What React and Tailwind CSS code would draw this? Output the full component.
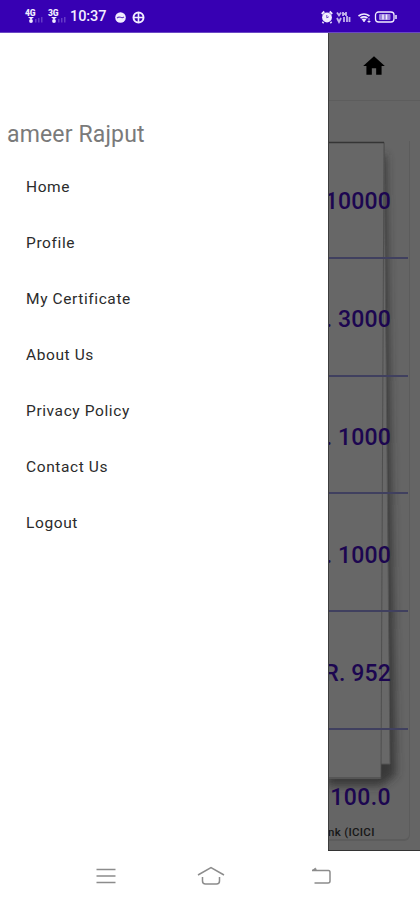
import { MdHome } from 'react-icons/md';

const menuItems = ['Home', 'Profile', 'My Certificate', 'About Us', 'Privacy Policy', 'Contact Us', 'Logout'];

const amounts = ['10000', '. 3000', '. 1000', '. 1000', 'R. 952'];

// Network label above a small triangle and faded bars
function Signal({ label }) {
  return (
    <div className="relative h-[14px] w-[19px]">
      <span className="absolute left-0 top-0 text-[8.5px] leading-[7px] font-black tracking-tight">{label}</span>
      <svg className="h-[14px] w-[19px]" viewBox="0 0 19 14" fill="currentColor">
        <path d="M3 7h6L6 9.5z" />
        <circle cx="6" cy="11" r="1.9" />
        <path opacity=".25" d="M10 9h1.5v3.500H10zM13 8h1.500v4.500H13zM16 7h1.500v5.500H16z" />
      </svg>
    </div>
  );
}

function StatusBar() {
  return (
    <header className="flex h-[33px] shrink-0 items-center border-b border-[#6a48c4] bg-[#3700b3] pl-[25px] pr-[22px] pt-0.5 text-[#f1edff]">
      <Signal label="4G" />
      <div className="w-1" />
      <Signal label="3G" />
      <span className="ml-[3px] w-[37px] text-[14.5px] font-medium leading-none tracking-[-0.1px]">10:37</span>
      <svg className="ml-[7px] h-[13px] w-[33px]" viewBox="0 0 33 13" fill="none">
        <circle cx="6.500" cy="6.500" r="5.300" fill="currentColor" />
        <path d="M3 7q1.500-1.500 3.500-.7t3.500-.3" stroke="#3700b3" strokeWidth="1.200" opacity=".75" />
        <circle cx="24.500" cy="6.500" r="5" stroke="currentColor" strokeWidth="2" />
        <path d="M24.500 1.500v10M19.500 6.500h10" stroke="currentColor" strokeWidth="1.600" />
      </svg>
      <div className="flex-1" />
      <svg className="h-[14px] w-[77px]" viewBox="0 0 77 14" fill="none" stroke="currentColor">
        {/* Alarm */}
        <circle cx="6" cy="7.500" r="4.900" fill="currentColor" stroke="none" />
        <path d="M.8 4l2.500-2.500M11.200 4L8.700 1.500M2.500 12l-1 1M9.500 12l1 1" strokeWidth="1.800" />
        <path d="M5.800 5v2.800l2-1" stroke="#3700b3" strokeWidth="1" opacity=".7" />
        {/* Carrier data */}
        <path d="M16 2.500l2 3 2-3M22 2v4M25 2v4M22 4h3M16 8l2 4 2-4M23 7v5M26 6v6M28.500 7v5" strokeWidth="1.800" opacity=".75" />
        {/* Wifi */}
        <path d="M37.500 6q5.500-4 11 0M39.500 8q3.500-2.400 7 0" strokeWidth="1.700" />
        <path d="M41 9h4l-2 3zM48 8v4M46.500 11l1.500 1.500 1.500-1.500" fill="currentColor" strokeWidth=".7" />
        {/* Battery */}
        <rect x="54.500" y="2" width="18.500" height="10" rx="3" strokeWidth="1.300" />
        <rect x="58" y="4" width="11.500" height="6" rx="1" fill="currentColor" stroke="none" opacity=".55" />
        <path d="M62 4.500v5M65.500 4.500v5" strokeWidth="1.500" />
        <path d="M75 5v4" strokeWidth="1.500" />
      </svg>
    </header>
  );
}

function Drawer() {
  return (
    <nav className="w-[328px] shrink-0 bg-white pt-[86px]">
      <h1 className="pl-[7px] text-[23px] leading-8 tracking-[0.15px] text-[#7a7a7a]">ameer Rajput</h1>
      <ul className="mt-3">
        {menuItems.map((item) => (
          <li key={item} className="flex h-14 items-center pb-1.5 pl-[26px] text-[15.5px] tracking-[0.6px] text-[#2b2b2b]">
            {item}
          </li>
        ))}
      </ul>
    </nav>
  );
}

// Watermark of two stacked sheets behind the amounts
function Sheets() {
  return (
    <svg className="absolute left-0 top-0 h-[818px] w-[92px]" viewBox="1 33 92 818" fill="none">
      <defs>
        <filter id="soft" x="-50%" y="-10%" width="200%" height="120%">
          <feGaussianBlur stdDeviation="4" />
        </filter>
      </defs>
      <path d="M0 155H59L69 775L54 786H0z" fill="#292929" opacity=".75" filter="url(#soft)" />
      <path d="M0 143H57L63 764H0z" fill="#686868" />
      <path d="M57 143L63 764H54" stroke="#555" />
      <path d="M0 142H57L54 779H0z" fill="#676767" />
      <path d="M57 142L54 779" stroke="#494949" strokeWidth=".8" />
      <path d="M0 142.500H57" stroke="#353535" strokeWidth="1.500" />
      <path d="M0 778H54" stroke="#454545" />
    </svg>
  );
}

function DimmedPage() {
  return (
    <main className="relative flex w-[92px] flex-col overflow-hidden border-b border-[#333] bg-[#656565]">
      <div className="flex h-[68px] shrink-0 justify-end border-b border-[#5d5d5d] pr-[33px] pt-5">
        <MdHome className="size-[26px] text-black" />
      </div>
      <div className="mr-[10px] mt-[40px] h-[700px] rounded-br-md border-b-2 border-r border-[#5c5c5c]">
        <Sheets />
        <div className="relative pr-px text-[23px] font-medium leading-none text-[#1c0650]">
          {amounts.map((amount, i) => (
            <div key={i} className="flex h-[117.8px] items-center justify-end whitespace-nowrap border-b-2 border-[#40405f] pr-[17px] pt-1.5 tracking-[0.15px]">
              {amount}
            </div>
          ))}
          <div className="flex justify-end whitespace-nowrap pr-[17px] pt-14 tracking-[0.4px]">100.0</div>
          <div className="mt-[18px] whitespace-nowrap text-[11.5px] font-medium tracking-[0.3px] text-[#171717]">nk (ICICI</div>
        </div>
      </div>
      {/* Shade along the drawer edge */}
      <div className="absolute inset-y-0 left-0 w-px bg-[#3d3d3d]" />
    </main>
  );
}

function NavBar() {
  return (
    <footer className="flex h-[49px] shrink-0 items-center bg-white pl-[96px] text-[#8c8c8c]">
      <svg className="h-5 w-5" viewBox="0 0 20 20" stroke="currentColor" strokeWidth="1.500">
        <path d="M.5 3.500h19M.5 10h19M.5 16.500h19" />
      </svg>
      <svg className="ml-[81px] h-5 w-7" viewBox="0 0 28 20" fill="none" stroke="currentColor" strokeWidth="1.500">
        <path d="M1 9L14 1.500 27 9M5.500 11v4q0 3 3 3h11q3 0 3-3v-4" />
      </svg>
      <svg className="ml-[86px] h-5 w-5" viewBox="0 0 20 20" fill="none" stroke="currentColor" strokeWidth="1.500">
        <path d="M1 4.500h16.500q1.500 0 1.500 2v8.500q0 2-2 2H3.500" />
        <path d="M4.500 2L1 4.500h4.500z" fill="currentColor" strokeWidth=".8" />
      </svg>
    </footer>
  );
}

export default function App() {
  return (
    <div className="flex h-[900px] w-[420px] flex-col overflow-hidden bg-white font-['Roboto',sans-serif]">
      <StatusBar />
      <div className="flex h-[818px]">
        <Drawer />
        <DimmedPage />
      </div>
      <NavBar />
    </div>
  );
}
